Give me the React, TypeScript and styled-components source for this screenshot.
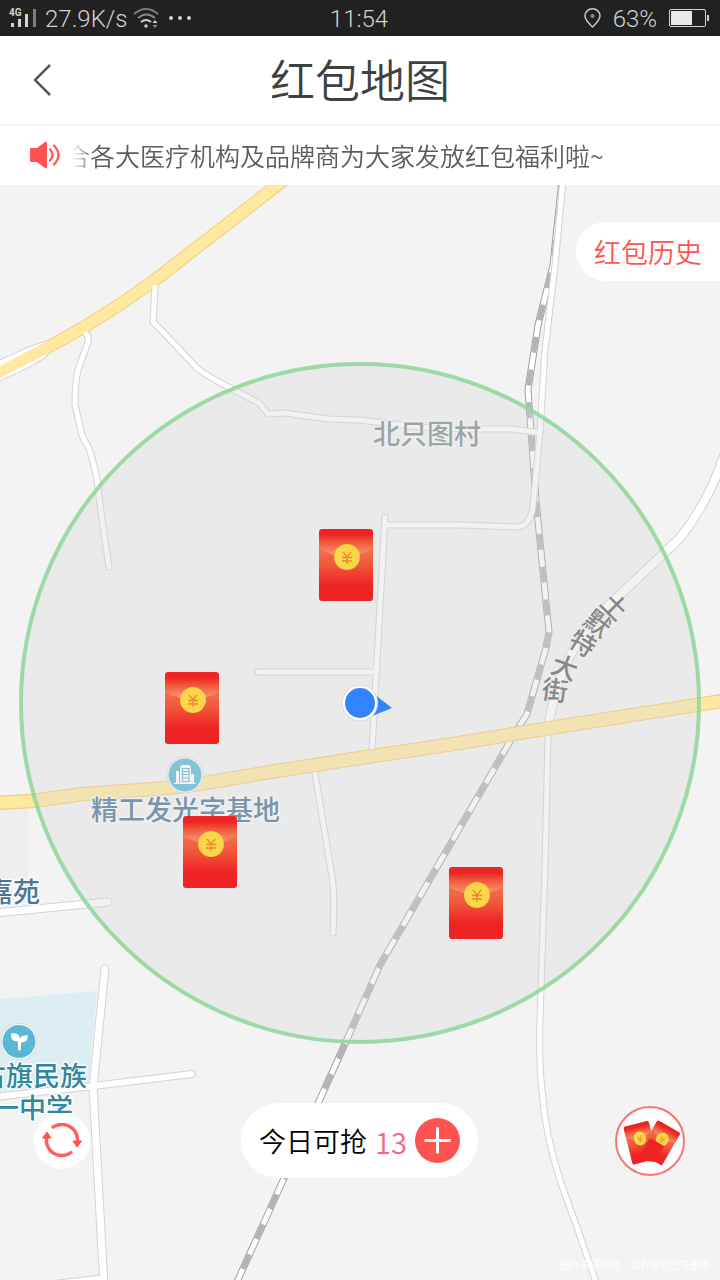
import React from "react";
import styled, { createGlobalStyle } from "styled-components";

const CJK = `"Noto Sans CJK SC", sans-serif`;

const GlobalStyle = createGlobalStyle`
  * { box-sizing: border-box; }
  body { margin: 0; background: #f3f3f3; font-family: ${CJK}; }
  button { border: 0; padding: 0; background: none; font: inherit; color: inherit; cursor: pointer; }
`;

const Screen = styled.div`
  display: flex;
  flex-direction: column;
  overflow: hidden;
`;

const StatusBar = styled.div`
  display: grid;
  grid-template-columns: 1fr auto 1fr;
  align-items: center;
  height: 36px;
  padding: 0 11px 0 9px;
  background: #212121;
  color: #d2d2d2;
  font: 300 24px/34px Roboto, sans-serif;
`;

const StatusGroup = styled.div<{ $end?: boolean }>`
  display: flex;
  align-items: center;
  justify-content: ${(p) => (p.$end ? "flex-end" : "flex-start")};
  gap: ${(p) => (p.$end ? 12 : 6)}px;
`;

const StatusText = styled.span`
  padding-top: 2px;
`;

const Header = styled.header`
  display: grid;
  grid-template-columns: 60px 1fr 60px;
  align-items: center;
  height: 90px;
  background: #fff;
  border-bottom: 2px solid #f4f4f4;
`;

const BackButton = styled.button`
  display: flex;
  justify-content: flex-end;
  padding-right: 8px;
`;

const Title = styled.h1`
  align-self: start;
  margin: 0;
  text-align: center;
  font-size: 45px;
  font-weight: 350;
  line-height: 86px;
  color: #404040;
`;

const Notice = styled.div`
  display: flex;
  align-items: center;
  gap: 12px;
  height: 59px;
  padding: 0 30px 2px;
  background: #fff;
`;

const Marquee = styled.div`
  flex: 1;
  overflow: hidden;
  mask-image: linear-gradient(to right, transparent, #000 24px);
`;

const MarqueeText = styled.p`
  margin: 0 0 0 -7px;
  white-space: nowrap;
  font-size: 25px;
  font-weight: 350;
  line-height: 36px;
  color: #5c5c5c;
`;

const MapArea = styled.main`
  position: relative;
  width: 100%;
  aspect-ratio: 720 / 1095;
  overflow: hidden;
  background: #f3f3f3;
`;

const MapDrawing = styled.svg`
  display: block;
  width: 100%;
  height: 100%;
`;

const Pin = styled.button<{ $x: number; $y: number }>`
  position: absolute;
  left: ${(p) => (p.$x / 720) * 100}%;
  top: ${(p) => (p.$y / 1095) * 100}%;
  width: 54px;
  height: 72px;

  svg { display: block; }
`;

const HistoryButton = styled.button`
  position: absolute;
  top: 37px;
  right: 0;
  height: 59px;
  padding: 0 18px;
  border-radius: 30px 0 0 30px;
  background: #fff;
  color: #ff5350;
  font-size: 27px;
  font-weight: 350;
  line-height: 59px;
`;

const ActionBar = styled.div`
  position: absolute;
  left: 0;
  right: 0;
  bottom: 102px;
  display: grid;
  grid-template-columns: 1fr auto 1fr;
  align-items: center;
  padding: 0 35px 0 34px;
`;

const RoundButton = styled.button<{ $size: number; $end?: boolean }>`
  display: flex;
  align-items: center;
  justify-content: center;
  width: ${(p) => p.$size}px;
  height: ${(p) => p.$size}px;
  justify-self: ${(p) => (p.$end ? "end" : "start")};
  border-radius: 50%;
  border: ${(p) => (p.$end ? "2px solid #fb7470" : "0")};
  background: #fff;
`;

const GrabPill = styled.button`
  display: flex;
  align-items: center;
  height: 75px;
  padding: 0 18px;
  border-radius: 38px;
  background: #fff;
  color: #000;
  font-size: 27px;
  font-weight: 350;
`;

const Count = styled.span`
  margin: 0 8px;
  font-size: 29px;
  color: #ff6287;
`;

const SourceNote = styled.small`
  position: absolute;
  right: 10px;
  bottom: 8px;
  font-size: 10px;
  line-height: 15px;
  color: #fff;
`;

const packets = [
  { x: 319, y: 344 },
  { x: 165, y: 487 },
  { x: 183, y: 631 },
  { x: 449, y: 682 },
];

const roads: { d: string; w: number }[] = [
  { w: 9, d: "M-8 368L27 352L46 345" },
  { w: 9, d: "M-8 380L25 365L42 355L48 348" },
  { w: 7, d: "M86 334Q89 336 88 342L78 370Q75 382 75 405L82 435Q85 443 89 448Q95 468 97 480L102 520L109 567" },
  { w: 7, d: "M155 287L153 322L163 332L197 368Q202 373 230 388L259 403L268 414L285 413L328 419L360 420L393 424L430 428L480 429L513 429L540 433" },
  { w: 7, d: "M376 672L258 672" },
  { w: 7, d: "M385 517L372 750" },
  { w: 7, d: "M563 180L555 265L545 350L540 432L533 506Q530 528 515 527L460 525L385 525" },
  { w: 7, d: "M548 736L545 867L541 990Q538 1060 542 1090Q545 1135 561 1183L578 1230L597 1285" },
  { w: 7, d: "M315 773L332 877Q335 895 333 933" },
  { w: 10, d: "M726 450Q710 500 680 538L623 592Q590 620 570 656Q555 685 548 728" },
  { w: 9, d: "M-5 913L108 902" },
  { w: 9, d: "M58 1284L103 1279" },
  { w: 9, d: "M105 969L93 1087L104 1286" },
  { w: 8, d: "M-5 1097L93 1086L192 1074" },
];

const highways: { d: string; w: number }[] = [
  { w: 13, d: "M284 180L155 280Q95 323 48 347L-8 376" },
  { w: 14, d: "M-5 803L33 801L83 794L167 788L200 784L270 772L360 758L440 746L550 728L728 700" },
];

const railDown = "M536 501L549 632L546 648L527 714L515 733L476 800L380 965L340 1055L236 1284";
const railUp = "M536 501L533 460L528 390L538 325L553 265L562 180";

const streetChars = [
  { c: "土", x: 615, y: 606, r: 45 },
  { c: "默", x: 598, y: 623, r: 38 },
  { c: "特", x: 583, y: 643, r: 32 },
  { c: "大", x: 565, y: 667, r: 20 },
  { c: "街", x: 555, y: 690, r: 8 },
];

const Label = ({ x, y, fill, children }: { x: number; y: number; fill: string; children: string }) => (
  <text x={x} y={y} fill={fill} fontSize="27" fontWeight="500" fontFamily={CJK} stroke="#fff" strokeWidth="3" strokeOpacity=".8" strokeLinejoin="round" paintOrder="stroke">
    {children}
  </text>
);

const Rail = ({ d, offset }: { d: string; offset: number }) => (
  <g fill="none">
    <path d={d} stroke="#a0a0a0" strokeWidth="7" />
    <path d={d} stroke="#fff" strokeWidth="5" />
    <path d={d} stroke="#b3b3b3" strokeWidth="5" strokeDasharray="16 17" strokeDashoffset={offset} />
  </g>
);

const PacketShape = () => (
  <g>
    <rect width="54" height="72" rx="3" fill="url(#packetBody)" />
    <path d="M0 4a4 4 0 0 1 4-4H50a4 4 0 0 1 4 4V20Q27 35 0 20Z" fill="url(#packetFlap)" />
    <circle cx="28" cy="28" r="13" fill="#f8cf47" />
    <circle cx="28" cy="28" r="12" fill="#fad748" />
    <path d="M24 23l4 5l4-5M28 28v7M23 28.500h10M23 32h10" fill="none" stroke="#f0853a" strokeWidth="1.300" />
  </g>
);

const MapScene = () => (
  <MapDrawing viewBox="0 185 720 1095" aria-hidden="true">
    <defs>
      <linearGradient id="packetBody" x1="0" y1="0" x2="0" y2="1">
        <stop offset=".25" stopColor="#f4734f" />
        <stop offset=".5" stopColor="#f0573a" />
        <stop offset=".78" stopColor="#ee2325" />
      </linearGradient>
      <linearGradient id="packetFlap" x1="0" y1="0" x2="0" y2="1">
        <stop offset=".2" stopColor="#ee2325" />
        <stop offset=".5" stopColor="#f15a3b" />
        <stop offset=".8" stopColor="#f58462" />
        <stop offset="1" stopColor="#f69270" />
      </linearGradient>
    </defs>
    <rect y="806" width="28" height="76" fill="#eeeeee" />
    <path d="M0 999L97 991L88 1086L0 1096Z" fill="#dceef2" />
    <Rail d={railDown} offset={0} />
    <Rail d={railUp} offset={16} />
    <g fill="none" strokeLinecap="round" strokeLinejoin="round">
      {roads.map((r) => <path key={r.d} d={r.d} stroke="#d3d3d3" strokeWidth={r.w} />)}
      {highways.map((r) => <path key={r.d} d={r.d} stroke="#f3cd7c" strokeWidth={r.w} />)}
      {roads.slice(0, 2).map((r) => <path key={r.d} d={r.d} stroke="#fff" strokeWidth={r.w - 2} />)}
      {highways.map((r) => <path key={r.d} d={r.d} stroke="#ffe9a0" strokeWidth={r.w - 2} />)}
      {roads.slice(2).map((r) => <path key={r.d} d={r.d} stroke="#fff" strokeWidth={r.w - 2} />)}
      <path d={highways[1].d} stroke="#f3cd7c" strokeWidth="14" />
      <path d={highways[1].d} stroke="#ffe9a0" strokeWidth="12" />
    </g>

    <Label x={373} y={444} fill="#7b8f8a">北只图村</Label>
    <Label x={91} y={820} fill="#4b7599">精工发光字基地</Label>
    <Label x={-14} y={902} fill="#4b7599">嘉苑</Label>
    <Label x={-21} y={1086} fill="#31879c">古旗民族</Label>
    <Label x={-8} y={1118} fill="#31879c">一中学</Label>
    {streetChars.map((s) => (
      <text key={s.c} transform={`translate(${s.x} ${s.y}) rotate(${s.r})`} y="10" textAnchor="middle" fontSize="26" fontWeight="500" fontFamily={CJK} fill="#606060" stroke="#fff" strokeWidth="2" strokeOpacity=".6" paintOrder="stroke">
        {s.c}
      </text>
    ))}

    <g transform="translate(185 775)">
      <circle r="18" fill="#fff" stroke="#d9d9d9" />
      <circle r="16.500" fill="#5bb8d4" />
      <path d="M-11 9H11V8H9V-1H6V-8L4-10H-3L-5-8V8H-6V-4H-9V8H-11Z" fill="#fff" />
      <path d="M-2.500 6.500V-6.500H4V6.500ZM-2.500-3.500H4M-2.500-.5H4M-2.500 3H4" fill="none" stroke="#5bb8d4" strokeWidth="1.200" />
    </g>
    <g transform="translate(19 1041.500)">
      <circle r="18" fill="#fff" stroke="#d9d9d9" />
      <circle r="16.500" fill="#5bb8d4" />
      <path d="M-8-8Q0-9 1-3Q3-7 9-6Q9 1 2 1V8Q2 9 .5 9T-1 8V0Q-9 0-8-8Z" fill="#fff" />
    </g>

    <circle cx="360" cy="703" r="339" fill="#d7d7d7" fillOpacity=".33" />
    <circle cx="360" cy="703" r="339" fill="none" stroke="#92d69c" strokeOpacity=".88" strokeWidth="4" />

    <path d="M374 694L392 708L372 716Z" fill="#3385ff" />
    <circle cx="360" cy="703" r="18" fill="#c9c9c9" />
    <circle cx="360" cy="703" r="17.500" fill="#fff" />
    <circle cx="360" cy="703" r="15" fill="#3385ff" />
  </MapDrawing>
);

export default function App() {
  return (
    <>
      <GlobalStyle />
      <Screen>
        <StatusBar>
          <StatusGroup>
            <svg width="30" height="24" viewBox="0 0 30 24" fill="#d2d2d2">
              <text x="0" y="10" fontFamily="Roboto, sans-serif" fontSize="10" fontWeight="700">4G</text>
              <path d="M2 17h3v4H2zM9 13h3v8H9zM16 8h3v13h-3z" />
              <path d="M24 3h3v18h-3z" fill="#7d7d7d" />
            </svg>
            <StatusText>27.9K/s</StatusText>
            <svg width="58" height="24" viewBox="0 0 58 24" fill="none" stroke="#d2d2d2" strokeWidth="2">
              <path d="M0 8Q12-2 24 8" stroke="#7d7d7d" />
              <path d="M4 12Q12 5 21 12" stroke="#8a8a8a" />
              <path d="M7 16Q12 12 17 16" />
              <circle cx="12" cy="20" r="1.700" fill="#d2d2d2" stroke="none" />
              <path d="M18.500 17l2.500-3l2.500 3z" fill="#d2d2d2" stroke="none" />
              <path d="M18.500 19l2.500 3l2.500-3z" fill="#8d8d8d" stroke="none" />
              <g fill="#d2d2d2" stroke="none">
                <circle cx="37" cy="12" r="2" /><circle cx="46" cy="12" r="2" /><circle cx="55" cy="12" r="2" />
              </g>
            </svg>
          </StatusGroup>
          <StatusText>11:54</StatusText>
          <StatusGroup $end>
            <svg width="17" height="20" viewBox="0 0 17 20" fill="none" stroke="#c8c8c8" strokeWidth="1.500">
              <path d="M8.500 19Q1 12 1 8a7.500 7.200 0 0 1 15 0Q16 12 8.500 19Z" />
              <circle cx="8.500" cy="8" r="2" fill="#8d8d8d" stroke="none" />
            </svg>
            <StatusText>63%</StatusText>
            <svg width="40" height="18" viewBox="0 0 40 18">
              <rect x=".5" y=".5" width="36" height="17" rx="1.500" fill="none" stroke="#d2d2d2" />
              <path d="M2 2h21v14H2z" fill="#e8e8e8" />
              <path d="M38 6h2v6h-2z" fill="#d2d2d2" />
            </svg>
          </StatusGroup>
        </StatusBar>

        <Header>
          <BackButton aria-label="返回">
            <svg width="20" height="34" viewBox="0 0 20 34" fill="none" stroke="#5a5a5a" strokeWidth="2.500">
              <path d="M18 2L3 17L18 32" />
            </svg>
          </BackButton>
          <Title>红包地图</Title>
        </Header>

        <Notice>
          <svg width="30" height="28" viewBox="0 0 30 28">
            <path d="M0 8Q0 7 1 7H7L15 1Q17 0 17 2V26Q17 28 15 27L7 21H1Q0 21 0 20Z" fill="#ff5350" />
            <path d="M20 8.500Q25 14 20 19.500M24 4.500Q33 14 24 23.500" fill="none" stroke="#ff5f5b" strokeWidth="2.400" strokeLinecap="round" />
          </svg>
          <Marquee>
            <MarqueeText>合各大医疗机构及品牌商为大家发放红包福利啦~</MarqueeText>
          </Marquee>
        </Notice>

        <MapArea>
          <MapScene />
          {packets.map((p) => (
            <Pin key={`${p.x}-${p.y}`} $x={p.x} $y={p.y} aria-label="红包">
              <svg width="54" height="72" viewBox="0 0 54 72"><PacketShape /></svg>
            </Pin>
          ))}
          <HistoryButton>红包历史</HistoryButton>
          <ActionBar>
            <RoundButton $size={56} aria-label="刷新">
              <svg width="40" height="36" viewBox="0 0 40 36" fill="none" stroke="#ff5f5b" strokeWidth="3.400">
                <path d="M11 4Q15 1.500 20 1.500A15.500 15.500 0 0 1 35.500 18" strokeLinecap="round" />
                <path d="M29 29.500Q25 32.500 20 32.500A15.500 15.500 0 0 1 4.500 15" strokeLinecap="round" />
                <path d="M31 18h8.500l-4.500 6zM.5 15h8.500l-4-6z" fill="#ff5350" stroke="#ff5350" strokeWidth="1" strokeLinejoin="round" />
              </svg>
            </RoundButton>
            <GrabPill>
              今日可抢
              <Count>13</Count>
              <svg width="45" height="45" viewBox="0 0 45 45">
                <circle cx="22.500" cy="22.500" r="22.500" fill="#ff5350" />
                <path d="M22.500 9.500v26M9.500 22.500h26" stroke="#fff" strokeWidth="3" />
              </svg>
            </GrabPill>
            <RoundButton $size={70} $end aria-label="我的红包">
              <svg width="66" height="66" viewBox="0 0 66 66">
                <g transform="translate(40.700 12) rotate(30) scale(.49 .52)"><PacketShape /></g>
                <g transform="translate(6.300 19) rotate(-14) scale(.48 .54)"><PacketShape /></g>
                <path d="M33 30L47 38L38 54L20 52Z" fill="#ee2325" />
              </svg>
            </RoundButton>
          </ActionBar>
          <SourceNote>图片来源网络，如有侵权立马删除</SourceNote>
        </MapArea>
      </Screen>
    </>
  );
}
